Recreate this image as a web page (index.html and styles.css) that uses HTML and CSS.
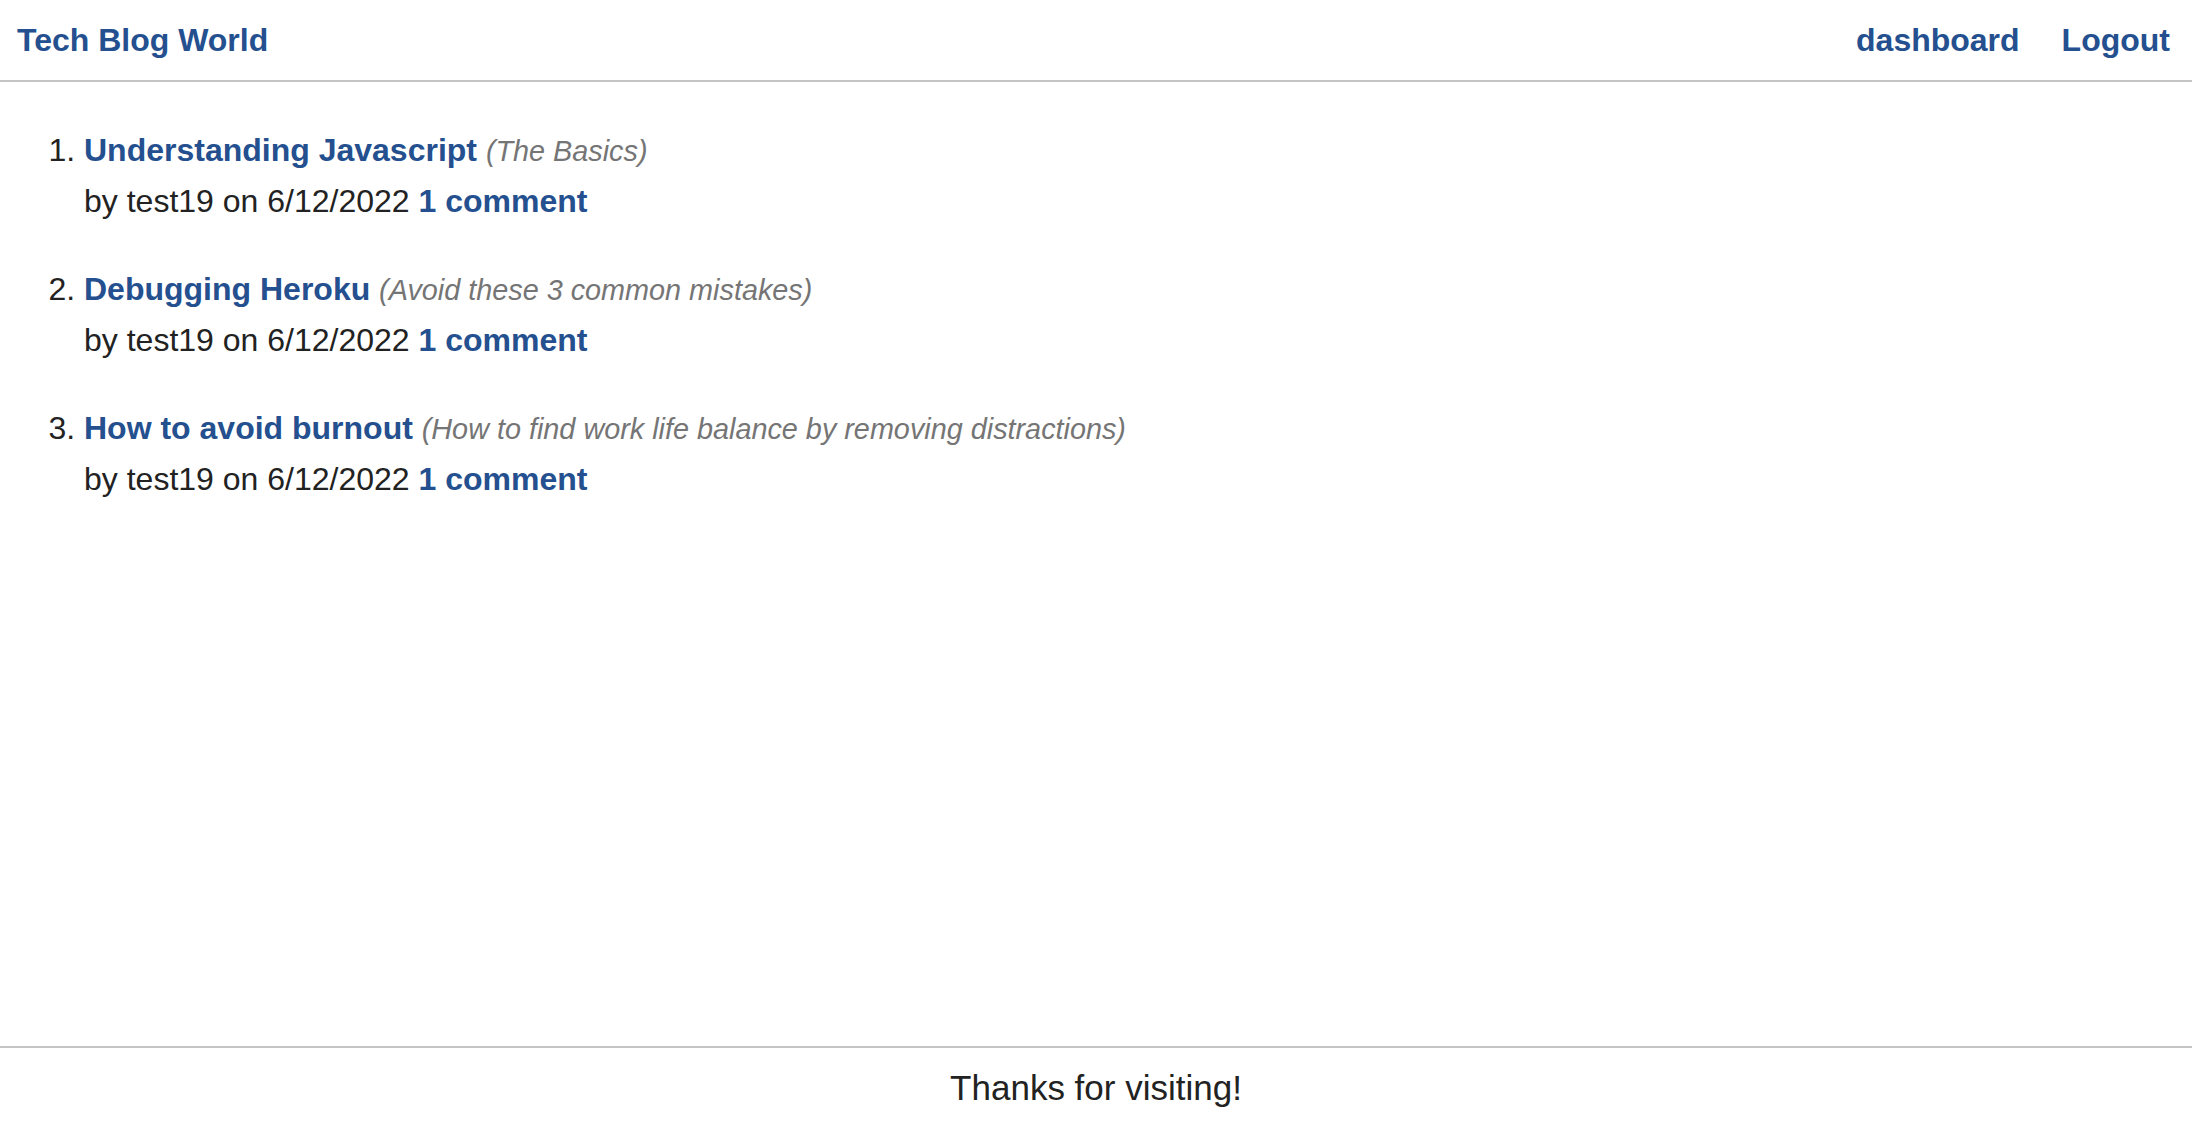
FILE: index.html
```html
<!DOCTYPE html>
<html lang="en">
<head>
<meta charset="utf-8">
<title>Tech Blog World</title>
<link rel="stylesheet" href="styles.css">
</head>
<body>
<header class="site-header">
  <a class="brand" href="#">Tech Blog World</a>
  <nav class="nav">
    <a href="#">dashboard</a>
    <a href="#">Logout</a>
  </nav>
</header>
<main class="content">
  <ol class="posts">
    <li class="post">
      <div class="post-title"><a href="#">Understanding Javascript</a> <span class="sub">(The Basics)</span></div>
      <div class="post-meta">by test19 on 6/12/2022 <a href="#">1 comment</a></div>
    </li>
    <li class="post">
      <div class="post-title"><a href="#">Debugging Heroku</a> <span class="sub">(Avoid these 3 common mistakes)</span></div>
      <div class="post-meta">by test19 on 6/12/2022 <a href="#">1 comment</a></div>
    </li>
    <li class="post">
      <div class="post-title"><a href="#">How to avoid burnout</a> <span class="sub">(How to find work life balance by removing distractions)</span></div>
      <div class="post-meta">by test19 on 6/12/2022 <a href="#">1 comment</a></div>
    </li>
  </ol>
</main>
<footer class="site-footer">Thanks for visiting!</footer>
</body>
</html>
```

FILE: styles.css
```css
html, body {
  margin: 0;
  padding: 0;
}
body {
  min-height: 100vh;
  display: flex;
  flex-direction: column;
  font-family: "Liberation Sans", Arial, Helvetica, sans-serif;
  font-size: 32px;
  color: #222;
  background: #fff;
}
a {
  color: #24508f;
  font-weight: bold;
  text-decoration: none;
}
.site-header {
  height: 80px;
  box-sizing: content-box;
  display: flex;
  align-items: center;
  justify-content: space-between;
  padding: 0 22px 0 17px;
  border-bottom: 2px solid #c4c4c4;
}
.nav {
  display: flex;
  gap: 42px;
}
.content {
  flex: 1;
}
.posts {
  margin: 0;
  padding: 43px 0 0 84px;
}
.post {
  margin-bottom: 38px;
}
.post-title,
.post-meta {
  line-height: 50px;
}
.sub {
  font-style: italic;
  font-size: 28.8px;
  color: #757575;
}
.site-footer {
  height: 80px;
  display: flex;
  align-items: center;
  justify-content: center;
  border-top: 2px solid #c4c4c4;
  font-size: 35px;
  color: #222;
}
```
